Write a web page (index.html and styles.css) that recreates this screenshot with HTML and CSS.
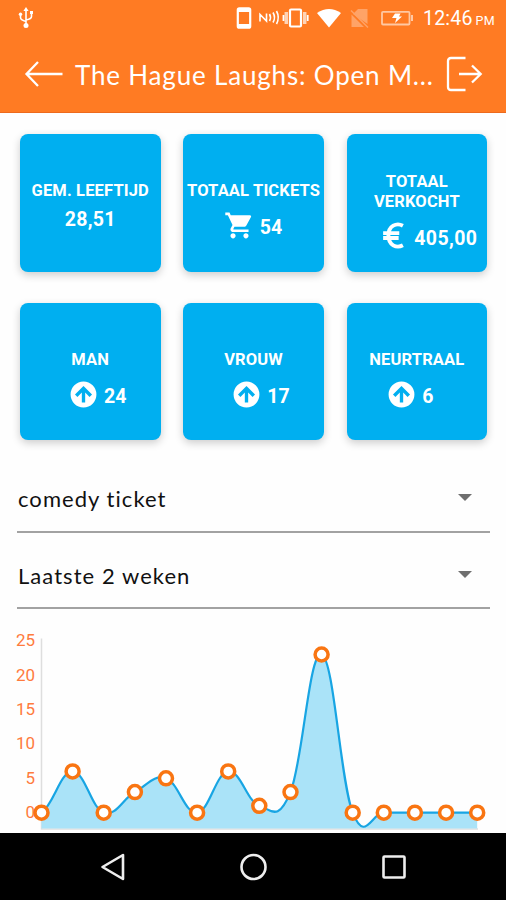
FILE: index.html
```
<!doctype html>
<html lang="nl">
  <head>
    <meta charset="UTF-8" />
    <meta name="viewport" content="width=device-width, initial-scale=1.0" />
    <title>The Hague Laughs</title>
    <link rel="stylesheet" href="styles.css">
  </head>
  <body>
    <div class="screen">
      <header class="header">
        <div class="statusbar">
          <svg class="usb" width="16" height="22" viewBox="0 0 16 22">
            <path d="M8 3v15M2.500 8v2.500Q2.500 13 8 14.500M13.500 6.500v3Q13.500 12 8 13" fill="none" stroke="#fff" stroke-width="1.600" />
            <path d="M8 0l2.600 4H5.400zM12 4h3v3h-3z" fill="#fff" />
            <circle cx="2.500" cy="7.300" r="1.700" fill="#fff" />
            <circle cx="8" cy="18.500" r="2.500" fill="#fff" />
          </svg>
          <svg class="tray" width="180" height="24" viewBox="0 0 180 24">
            <rect x="1.800" y="2.300" width="12.400" height="19.400" rx="1.500" fill="none" stroke="#fff" stroke-width="2.200" />
            <path d="M1.500 4.500h13M1.500 19.500h13" stroke="#fff" stroke-width="3" />
            <path d="M24 15.500V8.500l6.500 6.500V7.500M33.500 8q2 3.500 0 7M37 6.500q3 5 0 10M40.500 5q3.500 6.500 0 13" fill="none" stroke="#fff" stroke-width="1.600" />
            <rect x="54" y="3.500" width="11" height="17" rx="1" fill="none" stroke="#fff" stroke-width="2.200" />
            <path d="M50.300 6v12M68.700 6v12" stroke="#ffd3b5" stroke-width="3.500" />
            <path d="M47.500 9v6M71.700 9v6" stroke="#fff" stroke-width="1.800" />
            <path d="M81 7q12-8 24 0L93 21.500z" fill="#fff" />
            <path d="M117 8l5-5h9.500v15zM115.500 8.500V21H128z" fill="#ffa367" />
            <path d="M115 4.500L132 21.500" stroke="#ffa367" stroke-width="1.500" />
            <rect x="146" y="5.800" width="27.500" height="12.700" rx="1" fill="none" stroke="#ffc8a3" stroke-width="1.800" />
            <path d="M176 9v6" stroke="#ffc8a3" stroke-width="2" />
            <path d="M159 7.500h5.500l-1.500 3h3l-7 6.500 1.500-5H156z" fill="#fff" />
          </svg>
          <div class="clock">12:46<small>PM</small></div>
        </div>
        <div class="appbar">
          <svg class="back" width="40" height="28" viewBox="0 0 40 28">
            <path d="M38.500 14H3M14 2L2.500 14 14 26" fill="none" stroke="#fff" stroke-width="2.300" />
          </svg>
          <h1>The Hague Laughs: Open M...</h1>
          <svg class="logout" width="38" height="36" viewBox="0 0 38 36">
            <path d="M20.500 2H6Q3 2 3 5v26q0 3 3 3h14.500M14 18h22M27 9.500l8.700 8.500-8.700 8.500" fill="none" stroke="#fff" stroke-width="2.300" />
          </svg>
        </div>
      </header>

      <svg class="sprite" width="0" height="0">
        <symbol id="cart" viewBox="0 0 24 24">
          <path d="M7 18c-1.100 0-1.990.9-1.990 2S5.900 22 7 22s2-.9 2-2-.9-2-2-2zM1 2v2h2l3.600 7.590-1.350 2.450c-.16.280-.25.610-.25.960 0 1.100.9 2 2 2h12v-2H7.420c-.14 0-.25-.11-.25-.25l.03-.12.9-1.630h7.450c.75 0 1.410-.41 1.750-1.030l3.580-6.490A1 1 0 0 0 20 4H5.210l-.94-2H1zm16 16c-1.100 0-1.990.9-1.990 2s.89 2 1.990 2 2-.9 2-2-.9-2-2-2z" />
        </symbol>
        <symbol id="euro" viewBox="0 0 24 24">
          <path d="M18.500 4.400C13.500 1.800 7.300 4.500 7.300 12S13.500 22.200 18.500 19.600M3.200 10.200h12.500M3.200 13.900h12" fill="none" stroke="#fff" stroke-width="3" />
        </symbol>
        <symbol id="up" viewBox="0 0 24 24">
          <path fill-rule="evenodd" d="M12 2a10 10 0 1 0 0 20a10 10 0 1 0 0-20zM10.700 18.200V10.500L7.300 13.900 5.400 12 12 5.400l6.600 6.600-1.900 1.900-3.400-3.400v7.700z" />
        </symbol>
      </svg>

      <main>
        <section class="cards">
          <div class="card plain">
            <h2>GEM. LEEFTIJD</h2>
            <div class="value">28,51</div>
          </div>
          <div class="card tickets">
            <h2>TOTAAL TICKETS</h2>
            <div class="value"><svg><use href="#cart" /></svg>54</div>
          </div>
          <div class="card wide">
            <h2>TOTAAL<br>VERKOCHT</h2>
            <div class="value"><svg><use href="#euro" /></svg>405,00</div>
          </div>
          <div class="card gender">
            <h2>MAN</h2>
            <div class="value"><svg><use href="#up" /></svg>24</div>
          </div>
          <div class="card gender">
            <h2>VROUW</h2>
            <div class="value"><svg><use href="#up" /></svg>17</div>
          </div>
          <div class="card gender neutral">
            <h2>NEURTRAAL</h2>
            <div class="value"><svg><use href="#up" /></svg>6</div>
          </div>
        </section>

        <section class="selects">
          <div class="select ticket">comedy ticket<span class="arrow"></span></div>
          <div class="select period">Laatste 2 weken<span class="arrow"></span></div>
        </section>

        <svg class="chart" width="506" height="224" viewBox="0 609 506 224">
          <path d="M41.500 638.500V829H478" fill="none" stroke="#dedede" stroke-width="1.500" />
          <g class="axis">
            <text x="35" y="646">25</text>
            <text x="35" y="680.500">20</text>
            <text x="35" y="715">15</text>
            <text x="35" y="749">10</text>
            <text x="35" y="783.500">5</text>
            <text x="35" y="818">0</text>
          </g>
          <!-- one unit = one day on x, one ticket on y -->
          <g transform="translate(41.500 812.700) scale(31.120 -6.880)">
            <path class="area" d="M0 0C.4 1.200 .6 6 1 6S1.600 .6 2 0S2.600 2 3 3S3.600 5.600 4 5S4.600 -.2 5 0S5.600 5.800 6 6S6.600 1.600 7 1S7.600 -1.400 8 3S8.600 23.600 9 23S9.600 4.600 10 0S10.600 0 11 0H14V-2.300H0z" />
            <path class="line" d="M0 0C.4 1.200 .6 6 1 6S1.600 .6 2 0S2.600 2 3 3S3.600 5.600 4 5S4.600 -.2 5 0S5.600 5.800 6 6S6.600 1.600 7 1S7.600 -1.400 8 3S8.600 23.600 9 23S9.600 4.600 10 0S10.600 0 11 0H14" />
          </g>
          <g class="dots">
            <circle cx="41.500" cy="812.700" r="6.500" />
            <circle cx="72.600" cy="771.400" r="6.500" />
            <circle cx="103.700" cy="812.700" r="6.500" />
            <circle cx="134.900" cy="792.100" r="6.500" />
            <circle cx="166" cy="778.300" r="6.500" />
            <circle cx="197.100" cy="812.700" r="6.500" />
            <circle cx="228.200" cy="771.400" r="6.500" />
            <circle cx="259.300" cy="805.800" r="6.500" />
            <circle cx="290.500" cy="792.100" r="6.500" />
            <circle cx="321.600" cy="654.500" r="6.500" />
            <circle cx="352.700" cy="812.700" r="6.500" />
            <circle cx="383.800" cy="812.700" r="6.500" />
            <circle cx="414.900" cy="812.700" r="6.500" />
            <circle cx="446.100" cy="812.700" r="6.500" />
            <circle cx="477.200" cy="812.700" r="6.500" />
          </g>
        </svg>
      </main>

      <nav class="navbar">
        <svg width="28" height="30" viewBox="0 0 28 30">
          <path d="M24 3v24L3.500 15z" fill="none" stroke="#eee" stroke-width="2.600" stroke-linejoin="round" />
        </svg>
        <svg width="28" height="30" viewBox="0 0 28 30">
          <circle cx="14.500" cy="15" r="12" fill="none" stroke="#eee" stroke-width="2.600" />
        </svg>
        <svg width="28" height="30" viewBox="0 0 28 30">
          <rect x="3.500" y="4.500" width="21" height="21" rx="1" fill="none" stroke="#eee" stroke-width="2.600" />
        </svg>
      </nav>
    </div>
  </body>
</html>
```
FILE: styles.css
```
* {
  box-sizing: border-box;
}

body {
  margin: 0;
  font-family: Roboto, sans-serif;
  background-color: #fefefe;
}

svg {
  display: block;
  flex-shrink: 0;
}

.screen {
  height: 900px;
  display: flex;
  flex-direction: column;
  overflow: hidden;
}

.header {
  height: 113px;
  background-color: #ff7b23;
  border-bottom: 1px solid #ed6a1d;
  color: #fff;
}
.statusbar {
  height: 36px;
  display: flex;
  align-items: center;
  padding: 0 10px 0 18px;
}
.tray {
  margin-left: 202px;
  margin-top: -1px;
}
.clock {
  display: flex;
  align-items: baseline;
  gap: 3px;
  margin-left: 7px;
  font-size: 19.5px;
  letter-spacing: 0.2px;
  white-space: nowrap;
}
.clock small {
  font-size: 12.5px;
}
.appbar {
  height: 76px;
  display: flex;
  align-items: center;
  padding-left: 24px;
}
.appbar h1 {
  width: 370px;
  margin: 2px 0 0 11px;
  font-family: Lato, sans-serif;
  font-size: 26px;
  font-weight: 400;
  letter-spacing: 0.82px;
  white-space: nowrap;
}
.appbar .back,
.appbar .logout {
  margin-top: -1px;
}

.sprite {
  position: absolute;
}

.cards {
  display: grid;
  grid-template-columns: repeat(3, 140.5px);
  grid-auto-rows: 137.5px;
  gap: 31px 22.8px;
  padding: 21px 0 0 20px;
}
.card {
  display: flex;
  flex-direction: column;
  align-items: center;
  padding-top: 47px;
  border-radius: 8px;
  background-color: #00aff0;
  box-shadow: 0 3px 8px rgba(0, 0, 0, 0.2);
  color: #fff;
}
.card h2 {
  margin: 0;
  font-size: 16.5px;
  line-height: 19.5px;
  letter-spacing: 0.15px;
  text-align: center;
  white-space: nowrap;
}
.value {
  height: 38px;
  display: flex;
  align-items: center;
  gap: 5px;
  padding: 0 0 0 14px;
  font-size: 19.5px;
  font-weight: 700;
}
.value svg {
  width: 31px;
  height: 31px;
  margin-top: -4px;
  fill: #fff;
}
.plain .value {
  padding: 0;
  letter-spacing: 0.3px;
}
.tickets .value {
  height: 54px;
  padding: 0 1px 0 0;
}
.tickets svg {
  margin-top: -5px;
}
.wide {
  padding-top: 38px;
}
.wide .value {
  height: 54px;
  gap: 4px;
  padding-left: 23px;
  letter-spacing: 0.4px;
}
.wide svg {
  margin-top: -5px;
}
.gender .value {
  height: 54px;
}
.neutral .value {
  padding: 0 14px 0 0;
}

.selects {
  padding: 26px 16px 0 17px;
}
.select {
  height: 76px;
  display: flex;
  align-items: center;
  justify-content: space-between;
  border-bottom: 2px solid #a2a2a2;
  padding: 12px 18px 0 1px;
  font-family: Lato, sans-serif;
  font-size: 22px;
  letter-spacing: 1.05px;
  color: #111;
}
.ticket {
  height: 66.5px;
  padding-top: 1px;
}
.arrow {
  border: 7px solid transparent;
  border-top-color: #6f6f6f;
  border-bottom: 0;
  margin-top: -2px;
}

.axis text {
  font-size: 17px;
  text-anchor: end;
  fill: #ff7b3d;
}
.area {
  fill: #aae3f8;
}
.line {
  fill: none;
  stroke: #18a5e3;
  stroke-width: 2.2px;
  vector-effect: non-scaling-stroke;
}
.dots circle {
  fill: #fff;
  stroke: #f97512;
  stroke-width: 3.5px;
}

main {
  height: 720px;
  overflow: hidden;
}
.navbar {
  flex: 1;
  display: flex;
  justify-content: center;
  gap: 112.5px;
  padding-top: 19px;
  background-color: #000;
}
```
